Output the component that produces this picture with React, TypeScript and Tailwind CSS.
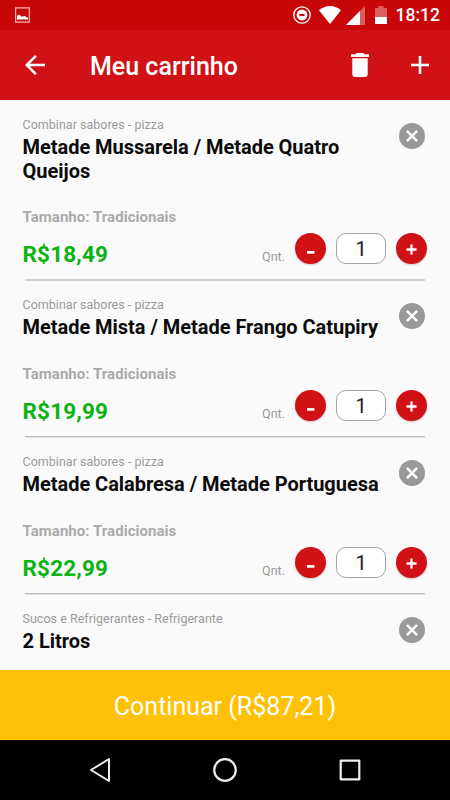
const items = [
    { category: "Combinar sabores - pizza", name: "Metade Mussarela / Metade Quatro Queijos", size: "Tradicionais", price: "R$18,49" },
    { category: "Combinar sabores - pizza", name: "Metade Mista / Metade Frango Catupiry", size: "Tradicionais", price: "R$19,99" },
    { category: "Combinar sabores - pizza", name: "Metade Calabresa / Metade Portuguesa", size: "Tradicionais", price: "R$22,99" },
    { category: "Sucos e Refrigerantes - Refrigerante", name: "2 Litros" },
];

type Item = { category: string; name: string; size?: string; price?: string };

function StatusBar() {
    return (
        <div className="h-[30px] shrink-0 bg-[#c8070b] flex items-center pl-[15px] pr-[10px] text-white">
            <svg width="15" height="16" viewBox="0 0 15 16" fill="none">
                <rect x="0.6" y="0.9" width="13.8" height="14.2" stroke="#f3b4b5" strokeWidth="1.3" />
                <path d="M2 12.6V9l1.500-1.300 1.500.3 1 1.500h2l2-.5 1 1 2 .8v1.800z" fill="#fff" />
            </svg>
            <svg className="ml-auto" width="18" height="18" viewBox="0 0 18 18" fill="none">
                <circle cx="9" cy="9" r="8.2" stroke="#fff" strokeWidth="1.3" />
                <circle cx="9" cy="9" r="5.4" fill="#fff" />
                <path d="M6.4 9h5.2" stroke="#c8070b" strokeWidth="2" />
            </svg>
            <svg className="ml-[8px]" width="22" height="18" viewBox="0 0 22 18">
                <path d="M11 18 0 4.300C3 1.600 6.800 0 11 0s8 1.600 11 4.300z" fill="#fff" />
            </svg>
            <svg className="ml-[5px]" width="19" height="19" viewBox="0 0 19 19">
                <path d="M19 0v19H0z" fill="#fff" fillOpacity="0.35" />
                <path d="M14 5v14H0z" fill="#fff" />
            </svg>
            <svg className="ml-[10px]" width="12" height="18" viewBox="0 0 12 18">
                <path d="M3.500 0h5v2H12v9H0V2h3.500z" fill="#fff" fillOpacity="0.35" />
                <path d="M0 11h12v7H0z" fill="#fff" />
            </svg>
            <span className="ml-[9px] text-[17.500px] leading-[30px] font-medium">18:12</span>
        </div>
    );
}

function Toolbar() {
    return (
        <header className="h-[70px] shrink-0 bg-[#d01116] flex items-center pl-[25px] pr-[21px] text-white">
            <svg width="20" height="20" viewBox="4 4 16 16" fill="#fff">
                <path d="M20 11H7.830l5.590-5.590L12 4l-8 8 8 8 1.410-1.410L7.830 13H20v-2z" />
            </svg>
            <h1 className="ml-[45px] mt-[3px] text-[25px] leading-8 font-medium">Meu carrinho</h1>
            <svg className="ml-auto" width="18" height="24" viewBox="5 3 14 18" preserveAspectRatio="none" fill="#fff">
                <path d="M6 19c0 1.100.9 2 2 2h8c1.100 0 2-.9 2-2V7H6v12zM19 4h-3.500l-1-1h-5l-1 1H5v2h14V4z" />
            </svg>
            <svg className="ml-[42px]" width="18" height="18" viewBox="5 5 14 14" fill="#fff">
                <path d="M19 13h-6v6h-2v-6H5v-2h6V5h2v6h6v2z" />
            </svg>
        </header>
    );
}

function Quantity() {
    return (
        <div className="flex items-center">
            <span className="mt-[17px] mr-[10px] text-[12.500px] leading-4 text-[#9b9b9b]">Qnt.</span>
            <button className="size-[31px] rounded-full bg-[#d01116] shadow-[0_1px_2px_rgba(0,0,0,0.2)] flex items-center justify-center">
                <svg width="9" height="15" viewBox="0 0 9 15">
                    <path d="M1 11.400h7.500" stroke="#fff" strokeWidth="2.600" />
                </svg>
            </button>
            <span className="ml-[10px] w-[50px] h-[31px] rounded-[10px] border border-[#a3a3a3] bg-white text-[20px] leading-[31px] text-center text-[#1c1c1c]">1</span>
            <button className="ml-[10px] size-[31px] rounded-full bg-[#d01116] shadow-[0_1px_2px_rgba(0,0,0,0.2)] flex items-center justify-center">
                <svg className="mt-[2px]" width="11" height="11" viewBox="0 0 11 11">
                    <path d="M.5 5.500h10M5.500.5v10" stroke="#fff" strokeWidth="2.300" />
                </svg>
            </button>
        </div>
    );
}

function CartItem({ item }: { item: Item }) {
    return (
        <li className="group shrink-0">
            <div className="flex items-start pl-[22.500px] pr-[25px] pt-[15px] group-first:pt-4">
                <div className="w-[365px]">
                    <p className="text-[12.500px] leading-[17px] tracking-[0.02px] text-[#9b9b9b]">{item.category}</p>
                    <h2 className="mt-[2px] text-[20px] leading-6 tracking-[-0.03px] font-bold text-[#0c0c0c]">{item.name}</h2>
                </div>
                <button className="ml-auto mt-[6.500px] size-[26px] rounded-full bg-[#999] flex items-center justify-center">
                    <svg width="12" height="12" viewBox="0 0 12 12">
                        <path d="m.9.9 10.200 10.200M11.100.9.9 11.100" stroke="#fff" strokeWidth="2.500" />
                    </svg>
                </button>
            </div>
            {item.price && (
                <>
                    <p className="mt-[25px] group-first:mt-6 pl-[22.500px] text-[15px] leading-5 tracking-[0.04px] font-bold text-[#aaa]">Tamanho: {item.size}</p>
                    <div className="mt-[6px] pl-[22.500px] pr-[23px] h-[31px] flex justify-between">
                        <span className="mt-[6px] text-[22.500px] leading-[31px] tracking-[0.16px] font-bold text-[#0bb213]">{item.price}</span>
                        <Quantity />
                    </div>
                    <div className="mt-[15px] mx-[25px] h-[2px] border-t border-[#bfbfbf] bg-[#dedede] group-first:border-[#d0d0d0] group-first:bg-[#d0d0d0]" />
                </>
            )}
        </li>
    );
}

function NavBar() {
    return (
        <nav className="h-[60px] shrink-0 bg-black flex items-center justify-between pl-[88px] pr-[88px]">
            <svg width="24" height="26" viewBox="0 0 24 26" fill="none" stroke="#eee" strokeWidth="2" strokeLinejoin="round">
                <path d="M21 2v22L3 13z" />
            </svg>
            <svg width="26" height="26" viewBox="0 0 26 26" fill="none" stroke="#eee" strokeWidth="2.200">
                <circle cx="13" cy="13" r="10.800" />
            </svg>
            <svg width="24" height="24" viewBox="0 0 24 24" fill="none" stroke="#eee" strokeWidth="2.200" strokeLinejoin="round">
                <rect x="2.700" y="2.700" width="18.600" height="18.600" />
            </svg>
        </nav>
    );
}

export default function App() {
    return (
        <div className="w-[450px] h-[800px] flex flex-col overflow-hidden bg-[#fafafa] font-[Roboto,sans-serif]">
            <StatusBar />
            <Toolbar />
            <ul className="flex-1 min-h-0 overflow-hidden flex flex-col">
                {items.map((item) => (
                    <CartItem key={item.name} item={item} />
                ))}
            </ul>
            <button className="h-[70px] shrink-0 bg-[#ffc107] text-white text-[25px] leading-8 pt-[3px]">Continuar (R$87,21)</button>
            <NavBar />
        </div>
    );
}
